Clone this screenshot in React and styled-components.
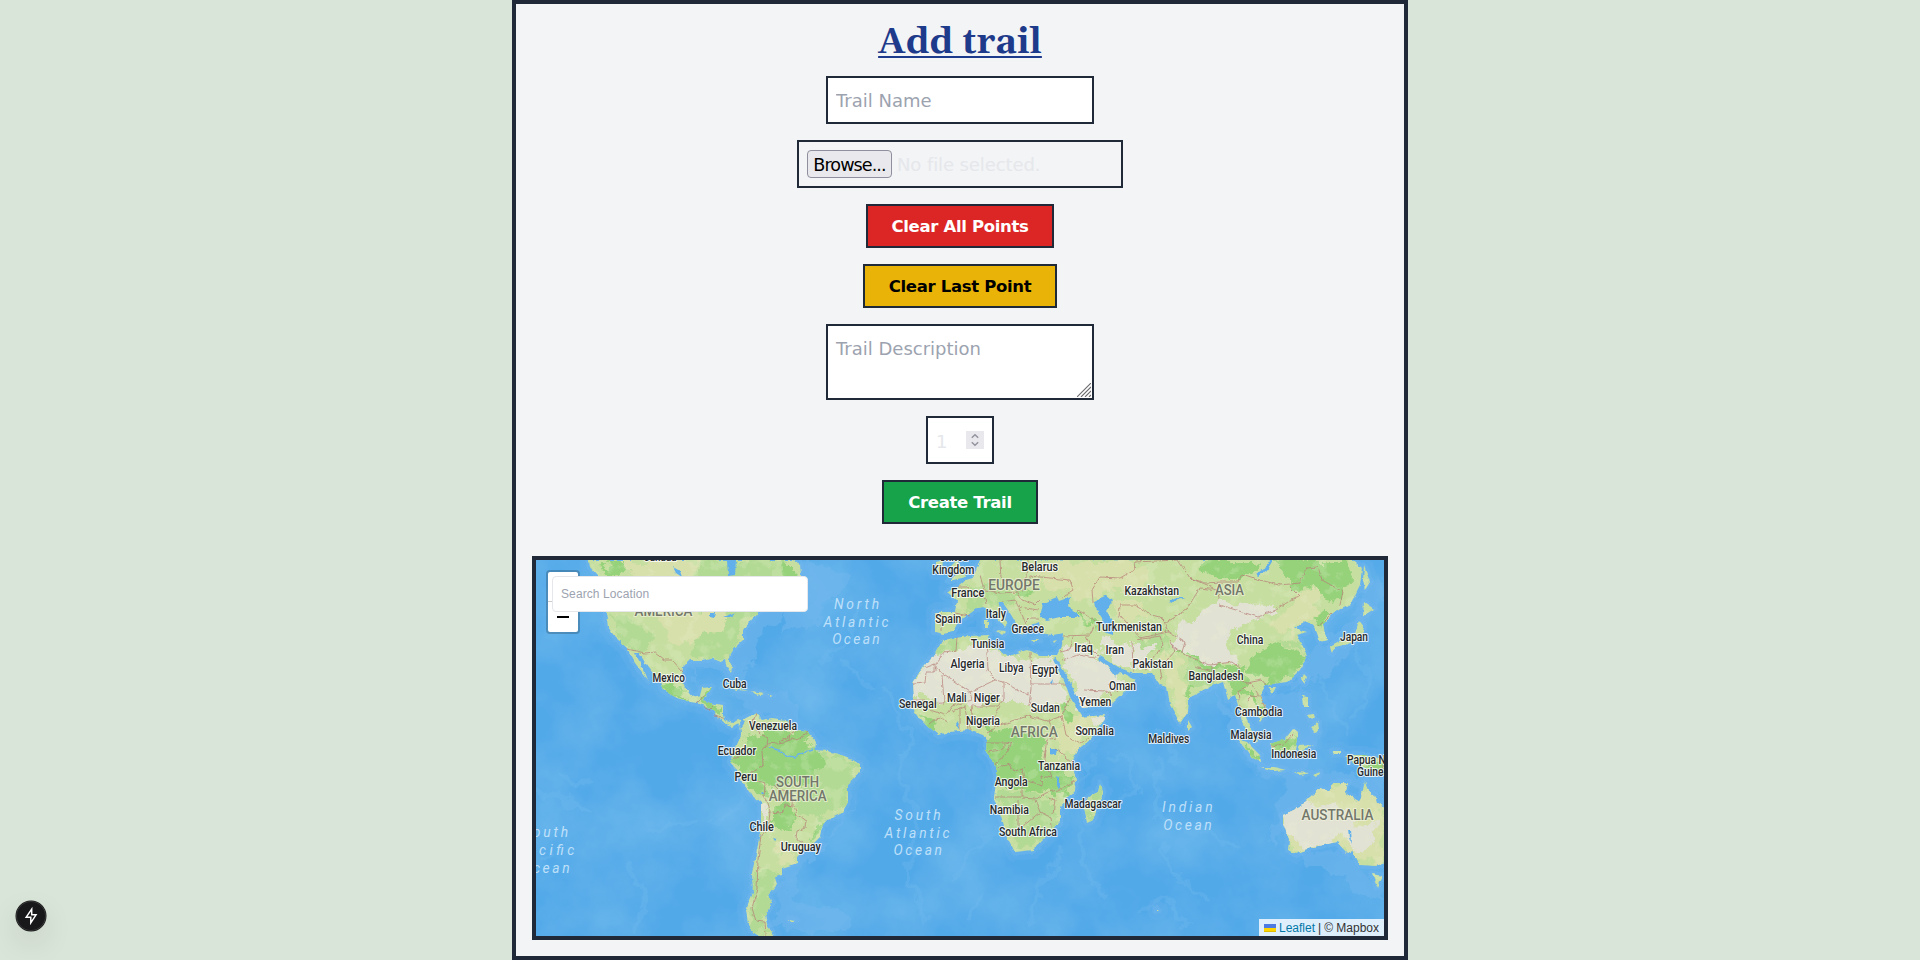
import React from "react";
import styled, { createGlobalStyle } from "styled-components";

const GlobalStyle = createGlobalStyle`
  *, *::before, *::after { box-sizing: border-box; }
  body {
    margin: 0;
    background: #dae5d9;
    font-family: "DejaVu Sans", Verdana, sans-serif;
    color: #e5e7eb;
  }
`;

const ink = "#1f2937";

const Page = styled.main`
  display: flex;
  justify-content: center;
  height: 960px;
  overflow: hidden;
`;

const Card = styled.section`
  width: 896px;
  height: 960px;
  padding: 16px;
  display: flex;
  flex-direction: column;
  background: #f3f4f6;
  border: 4px solid ${ink};
`;

const Form = styled.form`
  display: flex;
  flex-direction: column;
  align-items: center;
  gap: 16px;
`;

const Title = styled.h1`
  margin: 0;
  height: 40px;
  font: 700 36px/46px Gelasio, Georgia, "Liberation Serif", serif;
  color: #1e3a8a;
  text-decoration: underline;
  text-decoration-thickness: 2px;
  text-underline-offset: 3px;
  text-decoration-skip-ink: none;
`;

const Field = styled.input`
  width: 268px;
  height: 48px;
  padding: 8px;
  border: 2px solid ${ink};
  border-radius: 0;
  outline: none;
  background: #fff;
  color: #e5e7eb;
  font: 400 18px/28px "DejaVu Sans", sans-serif;
  &::placeholder { color: #9ca3af; opacity: 1; }
`;

const AreaWrap = styled.div`
  position: relative;
  width: 268px;
  height: 76px;
`;

const Area = styled(Field).attrs({ as: "textarea" })`
  display: block;
  height: 76px;
  padding-top: 9px;
  resize: none;
  overflow: hidden;
`;

const Grip = styled.svg`
  position: absolute;
  right: 3px;
  bottom: 3px;
`;

const FilePicker = styled.label`
  display: flex;
  align-items: center;
  gap: 5px;
  width: 326px;
  height: 48px;
  padding: 0 8px;
  border: 2px solid ${ink};
  font-size: 18px;
  line-height: 28px;
  white-space: nowrap;
`;

const FileStatus = styled.span`
  padding-top: 2px;
  letter-spacing: -0.1px;
`;

const Browse = styled.span`
  width: 85px;
  height: 28px;
  border: 1px solid #8f8f9d;
  border-radius: 4px;
  background: #e9e9ed;
  color: #000;
  font-size: 17.6px;
  line-height: 28px;
  letter-spacing: -0.95px;
  text-align: center;
`;

const NumberBox = styled.div`
  display: flex;
  align-items: center;
  justify-content: space-between;
  width: 68px;
  height: 48px;
  padding: 0 8px;
  background: #fff;
  border: 2px solid ${ink};
  font-size: 18px;
`;

const NumberValue = styled.span`
  padding-top: 2px;
`;

const Spinner = styled.span`
  display: flex;
  width: 18px;
  height: 18px;
  background: #e9e9ed;
`;

const Button = styled.button`
  width: ${(p) => p.$width}px;
  height: 44px;
  padding: 2px 0 0;
  border: 2px solid ${ink};
  border-radius: 0;
  background: ${(p) => p.$bg};
  color: ${(p) => p.$fg || "#fff"};
  font: 700 16.5px/24px "DejaVu Sans", sans-serif;
  letter-spacing: -0.33px;
  white-space: nowrap;
`;

const MapFrame = styled.div`
  position: relative;
  height: 384px;
  margin-top: 32px;
  border: 4px solid ${ink};
  overflow: hidden;
  background: #53a9e8;
  font-family: "Liberation Sans", Arial, sans-serif;
`;

const MapSvg = styled.svg`
  display: block;
  width: 848px;
  height: 376px;
`;

const ZoomBar = styled.div`
  position: absolute;
  left: 10px;
  top: 10px;
  width: 34px;
  height: 64px;
  border: 2px solid rgba(0, 0, 0, 0.2);
  border-radius: 4px;
  background: #fff;
  background-clip: padding-box;
`;

const ZoomButton = styled.div`
  height: 30px;
  border-bottom: ${(p) => (p.$last ? "none" : "1px solid #ccc")};
  display: flex;
  align-items: center;
  justify-content: center;
`;

const Search = styled.input`
  position: absolute;
  left: 16px;
  top: 16px;
  width: 256px;
  height: 36px;
  padding: 0 8px;
  border: 1px solid #e5e7eb;
  border-radius: 4px;
  outline: none;
  background: #fff;
  font: 400 12px/18px "Liberation Sans", Arial, sans-serif;
  letter-spacing: 0.1px;
  &::placeholder { color: #9ca3af; opacity: 1; }
`;

const Attribution = styled.div`
  position: absolute;
  right: 0;
  bottom: 0;
  display: flex;
  align-items: center;
  gap: 3px;
  height: 17px;
  padding: 0 5px;
  background: rgba(255, 255, 255, 0.8);
  color: #333;
  font-size: 12px;
  line-height: 18px;
  white-space: nowrap;
  a { color: #0078a8; }
`;

const DevBadge = styled.div`
  position: absolute;
  left: 16px;
  top: 901px;
  width: 30px;
  height: 30px;
  border-radius: 50%;
  background: #18181b;
  box-shadow: 0 0 0 0.5px #171717, inset 0 0 0 1px rgba(255, 255, 255, 0.14), 0 12px 32px -4px rgba(0, 0, 0, 0.2);
  display: flex;
  align-items: center;
  justify-content: center;
`;

const land = [
  // North and Central America
  "M589 560L590 567L597 575L603 592L606 612L608 627L615 637L627 648L635 663L648 680L644 670L635 653L639 653L648 667L660 682L663 690L677 698L690 702L698 703L708 708L715 710L717 717L725 723L732 727L738 723L741 728L745 722L738 719L732 723L724 719L723 715L723 705L710 703L703 700L706 696L712 687L702 688L700 695L692 697L685 688L682 677L683 667L690 660L702 660L710 658L720 662L725 660L727 667L731 673L732 667L728 657L732 650L743 640L743 630L750 622L758 612L775 606L790 600L803 600L808 595L798 588L801 575L800 565L793 560Z",
  // South America
  "M740 722L746 718L756 713L763 720L772 718L785 720L797 731L808 732L816 742L815 750L828 751L847 757L860 764L860 772L848 785L848 802L842 813L828 820L822 827L820 837L812 845L802 852L797 857L797 863L782 868L782 875L775 877L777 885L768 895L772 903L765 915L767 923L774 938L762 938L753 932L748 923L746 910L750 900L753 893L752 873L757 850L761 827L761 802L750 793L742 782L735 768L730 762L733 753L737 742L741 735Z",
  // Africa
  "M955 638L943 640L933 657L923 667L913 682L914 697L912 708L918 717L928 727L938 735L950 732L968 730L983 735L987 740L986 752L993 760L997 773L994 798L1002 820L1007 837L1015 852L1033 850L1050 833L1060 822L1060 807L1075 790L1076 780L1072 763L1077 750L1090 740L1100 727L1105 715L1082 717L1070 697L1065 683L1053 660L1058 655L1040 655L1027 650L1017 653L1008 657L1000 650L990 647L989 635L970 636Z",
  // Europe and Asia
  "M980 560L977 568L973 578L966 580L958 587L947 592L957 600L955 612L935 612L935 632L943 634L953 632L958 622L968 615L977 608L983 607L990 610L997 618L1005 628L1008 622L1000 608L998 602L1003 603L1010 613L1017 625L1022 635L1027 627L1038 622L1040 633L1053 635L1063 633L1062 645L1056 657L1060 664L1070 682L1082 708L1110 705L1118 697L1125 692L1136 680L1120 672L1115 677L1105 664L1098 659L1100 656L1120 668L1133 673L1152 673L1160 685L1167 687L1170 705L1180 723L1188 712L1189 698L1210 687L1223 682L1228 700L1235 695L1240 712L1242 722L1248 732L1256 743L1258 740L1250 728L1246 717L1247 708L1257 712L1260 722L1268 712L1260 695L1265 685L1287 682L1300 670L1307 655L1300 642L1297 635L1307 632L1295 628L1305 621L1313 625L1317 633L1320 642L1327 640L1323 625L1333 613L1350 605L1360 585L1362 568L1350 558Z",
  // Australia and Tasmania
  "M1283 815L1300 807L1310 797L1320 788L1330 792L1333 783L1348 783L1345 793L1360 802L1365 781L1368 792L1375 795L1377 803L1390 810L1390 862L1375 866L1360 865L1352 850L1347 853L1337 842L1313 847L1295 854L1288 850L1289 840L1283 823Z",
  "M1372 874L1382 876L1377 887Z",
  // Madagascar, Sri Lanka
  "M1100 783L1103 792L1093 820L1087 823L1084 808L1088 797L1098 792Z",
  "M1188 720L1192 727L1188 731Z",
  // Japan and Sakhalin
  "M1359 620L1364 627L1361 638L1348 644L1335 647L1332 654L1330 647L1343 640L1355 634Z",
  "M1364 602L1374 609L1363 616Z M1364 566L1370 582L1365 590L1363 580Z",
  // Taiwan, Hainan, Philippines
  "M1304 674L1307 677L1304 684L1301 680Z M1268 687L1276 687L1272 695Z M1302 695L1308 696L1308 707L1303 707Z M1312 728L1318 721L1319 731L1315 732Z M1308 715L1313 714L1314 719L1310 718Z",
  // Indonesia and New Guinea
  "M1238 739L1247 742L1260 755L1261 763L1252 758L1246 749Z",
  "M1270 744L1285 739L1293 729L1298 733L1295 750L1283 754L1272 749Z",
  "M1261 767L1274 767L1286 770L1274 771Z M1298 746L1314 745L1303 749L1307 757L1300 757Z M1332 751L1341 751L1341 754L1334 754Z",
  "M1295 772L1310 773L1300 775Z M1313 775L1320 772L1316 777Z",
  "M1345 755L1363 755L1388 760L1388 772L1367 769L1353 763Z",
  // Caribbean islands
  "M722 686L735 687L748 691L738 690Z M752 691L764 693L757 696Z M768 695L773 695L769 696Z",
  // Britain and Ireland, Mediterranean islands
  "M957 560L963 570L966 577L949 581L956 575L951 566Z M936 562L944 560L943 570L936 571Z",
  "M985 620L988 620L988 627L985 627Z M996 630L1006 631L1002 635Z M1032 640L1040 640L1034 642Z M1053 641L1057 640L1054 643Z",
  "M789 919L796 920L791 922Z M1156 908L1159 911L1156 911Z",
].join(" ");

const steppe = [
  "M625 560L700 560L690 580L700 606L682 635L674 640L660 620L655 590L625 575Z",
  "M667 618L722 610L720 630L690 640L670 636Z",
  "M1040 560L1130 560L1150 575L1130 590L1110 590L1090 600L1050 590L1040 580Z",
  "M1115 600L1135 600L1150 620L1120 620Z M1270 620L1300 595L1310 610L1290 640Z",
  "M1160 650L1180 660L1185 690L1188 712L1180 722L1167 687Z",
  "M1293 790L1350 785L1384 805L1384 866L1330 850L1295 854L1283 823Z",
  "M1298 590L1320 590L1320 615L1300 630L1285 605Z M780 842L797 855L795 865L778 864Z",
  "M1055 715L1105 715L1080 745L1060 760L1058 735Z M1250 695L1262 700L1266 713L1248 709Z",
];
const desert = [
  "M933 657L957 648L985 647L1008 657L1050 656L1065 690L1067 702L1030 706L1000 698L970 703L940 698L913 700L913 682Z",
  "M1060 645L1095 650L1115 677L1130 684L1082 706L1062 665Z",
  "M1100 638L1130 643L1137 665L1118 665L1100 655Z",
  "M1170 642L1182 622L1218 603L1272 604L1274 609L1260 619L1230 631L1222 644L1236 662L1210 665L1185 656Z",
  "M1283 815L1310 803L1345 806L1355 822L1374 819L1373 840L1362 850L1340 838L1305 846L1287 832Z",
  "M761 806L768 806L768 822L761 825Z M1092 718L1106 715L1096 731Z M1134 646L1155 643L1148 670L1133 672Z",
];
const forest = [
  "M741 737L760 730L800 730L815 747L820 760L815 781L778 785L755 782L736 765Z",
  "M738 765L752 775L767 788L768 798L750 790Z M775 808L792 805L797 820L789 828L775 820Z M815 823L822 821L820 832L811 840Z",
  "M987 730L1035 728L1045 742L1042 770L1022 772L1000 771L986 752Z",
  "M997 768L1048 768L1070 773L1074 785L1060 803L1052 792L1030 796L997 780Z",
  "M920 715L936 722L938 734L926 726Z M1065 700L1078 712L1066 722L1056 712Z",
  "M1205 560L1260 560L1252 578L1222 578L1200 567Z M1270 560L1345 560L1352 580L1340 605L1318 590L1292 585Z",
  "M1246 655L1278 645L1305 655L1297 674L1264 684L1248 675Z M1222 675L1240 664L1250 690L1258 690L1266 713L1252 692L1240 698L1233 690Z",
  "M1170 640L1225 668L1236 663L1232 670L1210 671L1175 652Z",
  "M661 683L672 684L690 702L675 697Z M700 694L712 686L708 699L722 705L722 714L708 706Z",
  "M600 564L630 562L628 575L606 577Z M780 560L795 565L800 588L782 582Z",
  "M1018 593L1032 590L1028 600L1014 597Z M1072 610L1095 622L1100 633L1080 618Z",
  "M1238 739L1261 757L1259 763Z M1270 744L1285 739L1296 731L1295 750L1274 750Z M1350 756L1388 762L1384 769L1360 766Z",
  "M1188 700L1198 688L1192 685L1186 692Z M1313 620L1330 606L1325 625Z",
];
const mildGreen = [
  "M610 615L640 620L655 640L640 655L620 642Z M700 560L790 560L800 590L745 620L735 660L692 655L700 620Z",
  "M820 752L860 764L848 800L822 818L800 812L792 790L815 775Z M756 870L778 872L764 910L770 936L752 930Z",
  "M995 790L1050 798L1060 820L1045 838L1016 848L1003 815Z M1100 783L1103 792L1087 823L1084 808Z",
  "M965 585L1010 585L1015 605L970 612Z M1280 645L1306 650L1298 640Z M933 640L955 638L958 646L935 655Z",
  "M1140 640L1165 628L1170 650L1145 656Z M1190 655L1225 672L1210 686L1192 690Z",
];

const lakes = [
  "M1040 617L1043 603L1057 597L1059 601L1070 597L1068 605L1080 617L1060 617L1047 620Z",
  "M1094 601L1107 595L1113 600L1106 611L1115 626L1113 635L1104 632L1102 618L1095 607Z",
  "M727 560L736 560L735 575L728 576Z M673 567L680 571L682 577L676 573Z M710 612L715 612L714 618L710 617Z M723 617L736 612L730 617Z",
  "M1050 748L1057 748L1056 755L1050 754Z M956 724L958 721L960 729L957 728Z M1050 683L1053 679L1052 684Z M1057 776L1059 778L1059 790L1057 785Z",
  "M1270 560L1273 560L1267 570L1258 577L1256 575L1264 569Z",
  "M1169 601L1178 597L1186 597L1178 599L1171 604Z M1349 830L1351 830L1352 843L1350 838Z M773 838L777 839L775 841Z M762 791L765 795L761 795Z",
];

const borders = [
  "M627 649L645 653L655 652L665 660L672 660L683 672",
  "M697 703L702 698L704 694M703 706L710 710L715 705M715 716L723 718",
  "M756 713L752 725L760 734L768 738L767 744L778 743L790 735L797 731M767 744L762 751L763 765L752 772L751 779L765 783M778 743L784 742L792 738L797 740L808 732M790 735L788 742",
  "M733 758L738 758L745 749M765 783L764 797L768 803L770 812L768 830L761 835L758 860L757 890L752 908L756 921L765 922L766 936",
  "M768 812L782 813L785 805L794 806L797 815L806 820L805 828L797 831L796 839L808 846M774 785L779 790L793 794L792 805",
  "M957 637L956 650L945 652L935 664L925 668M935 664L935 672L926 672L925 683L913 684M935 668L970 692L995 680L988 670L987 652L985 642M942 675L944 703L922 704M970 692L972 700L952 706L946 715M995 680L1004 682L1028 695L1028 692M1030 652L1031 689L1029 706M1031 684L1066 684M1004 682L1004 699L998 706L974 706",
  "M914 700L925 700L930 710L945 715M930 724L938 717L948 722M952 711L965 706L968 730M960 708L960 730M972 704L970 730M978 728L992 722L1000 706M987 733L1000 725L1028 716L1048 721L1062 716L1070 698M1062 716L1066 735L1080 744L1088 738M1048 721L1055 738L1047 740L1044 758M986 743L1012 743M988 752L1000 750L1009 742M995 764L1007 753L1012 742M997 768L1010 764L1014 772L1022 768L1024 780L1042 785L1041 776L1052 778L1045 760L1046 750M1054 747L1072 762M1022 780L1022 797L995 797M1022 798L1035 799L1048 792L1058 790L1075 781M1018 800L1018 830L1028 822L1040 812L1050 817L1051 827M1035 800L1040 812M1048 798L1055 800L1053 814L1050 817",
  "M935 615L942 615L941 630M955 613L970 616M958 587L968 587L972 593L985 598L986 605M980 575L984 590L977 595M1000 561L1001 578L1010 583L1027 578L1028 560M985 590L1000 593L1018 592L1030 585L1030 576L1070 580L1074 590L1062 598M1002 602L1015 600L1020 610L1026 624M1020 607L1038 610M1018 593L1022 600L1035 605L1040 600M1026 622L1030 618L1039 618",
  "M1063 636L1090 635L1095 625M1078 610L1098 622M1093 602L1092 590L1100 577L1120 578L1134 570L1135 562L1178 560L1190 578L1205 583L1222 582L1238 582L1242 574L1260 580L1280 585L1300 583L1306 568L1318 567L1322 580L1343 592L1340 605",
  "M1190 578L1218 590L1220 605L1258 617L1275 610L1290 600L1300 597L1290 587M1218 590L1200 588L1186 610L1165 622L1161 618M1119 618L1120 605L1135 605L1152 615L1163 618L1168 632L1140 638L1120 615",
  "M1060 652L1070 650L1073 637M1062 660L1078 655L1095 658M1086 636L1092 650L1098 656M1132 640L1133 672M1136 640L1160 636L1163 645L1152 660L1146 670M1170 640L1175 650L1160 667L1162 680M1172 645L1185 655L1210 665L1232 662L1240 668L1235 680L1223 678L1210 682M1165 630L1185 642L1182 652M1212 666L1212 672L1195 667",
  "M1240 680L1247 683L1262 680L1266 685M1250 682L1262 700L1267 713M1246 688L1238 692L1241 715M1248 702L1252 696L1260 697M1318 627L1327 618L1332 613",
  "M1271 746L1284 744L1293 734M1384 755L1384 770M1107 683L1118 693M1084 690L1105 691L1112 695",
].join("");

const shelf = "M590 560L812 600L765 625L740 690L722 668L690 668L700 688Z M800 560L850 575L815 625L780 630Z M730 690L790 695L800 725L770 712L745 706Z M785 865L835 835L855 800L868 780L820 850L800 870L790 905L850 915L845 930L770 930Z M1310 650L1355 615L1375 570L1384 600L1345 660L1320 680L1290 690Z M1232 705L1300 690L1320 735L1300 780L1262 775L1235 745Z M1290 775L1384 772L1384 800L1350 790L1300 805L1270 850L1275 810Z M1215 690L1235 720L1245 745L1230 735Z M1297 855L1340 850L1375 885L1384 900L1360 890Z";
const ridges = "M536 790L560 798L590 815M562 772L575 783L590 780M625 860L645 900L635 935M650 830L700 820M740 800L715 825M880 685L910 735L900 780L920 830L905 870L930 920M840 660L870 690M1000 825L975 850L950 880M980 895L970 920M1110 755L1130 765L1135 790L1120 800M1160 760L1158 820L1210 835L1240 845M1160 840L1180 880L1210 900M1060 850L1040 890L1030 925M1080 830L1085 870L1110 900M1140 910L1165 895L1185 925M1355 645L1375 690L1350 720M1320 680L1345 735M1160 730L1178 765M1095 755L1060 800M555 850L540 862M820 660L850 640L860 600";

const countries = [
  ["Canada", 660, 561, 33], ["Mexico", 668.7, 681.5, 32.5], ["Cuba", 734.7, 687.5, 24],
  ["Venezuela", 773, 730, 48], ["Ecuador", 737, 755, 38.5], ["Peru", 745.7, 781, 22.5],
  ["Chile", 761.7, 830.7, 24.5], ["Uruguay", 800.8, 850.7, 40], ["Angola", 1011.2, 786, 33],
  ["Namibia", 1009.3, 813.5, 39], ["South Africa", 1028, 836, 58], ["Tanzania", 1059, 769.5, 42],
  ["Madagascar", 1093, 808, 57], ["United", 953.7, 561, 29], ["Kingdom", 953.3, 573.5, 42],
  ["Belarus", 1039.8, 571.3, 36.5], ["France", 967.8, 596.8, 33], ["Spain", 948.3, 622.7, 26],
  ["Italy", 995.8, 618.3, 20], ["Greece", 1027.7, 632.8, 32.5], ["Tunisia", 987.5, 648.3, 33.5],
  ["Algeria", 967.5, 668, 34], ["Libya", 1011.3, 672, 24.5], ["Egypt", 1045, 673.7, 26.5],
  ["Mali", 956.8, 702, 19.5], ["Niger", 986.8, 702, 26], ["Senegal", 917.8, 707.8, 37.5],
  ["Sudan", 1045.3, 712, 29], ["Nigeria", 983, 724.5, 34], ["Somalia", 1094.7, 735.2, 38.5],
  ["Yemen", 1095.3, 706, 32], ["Iraq", 1083.5, 652, 18.5], ["Kazakhstan", 1151.7, 595, 54.5],
  ["Turkmenistan", 1129, 630.8, 66], ["China", 1250, 643.7, 26.5], ["Iran", 1114.7, 653.8, 18.5],
  ["Pakistan", 1152.7, 668, 40.5], ["Bangladesh", 1216, 680, 55], ["Oman", 1122.5, 689.5, 27],
  ["Cambodia", 1258.7, 716, 47.5], ["Malaysia", 1251, 739, 41], ["Maldives", 1168.7, 742.5, 41],
  ["Japan", 1354, 640.5, 28], ["Indonesia", 1293.8, 758, 45], ["Papua New", 1373, 764, 52],
  ["Guinea", 1373, 776.2, 32],
];

const continents = [
  ["AMERICA", 663.5, 615.5, 58], ["SOUTH", 797.5, 786.8, 43], ["AMERICA", 797.7, 801.3, 58],
  ["EUROPE", 1014, 589.8, 51.5], ["AFRICA", 1034.3, 736.9, 47], ["ASIA", 1229.5, 595, 29],
  ["AUSTRALIA", 1337.5, 820.4, 72],
];

const oceans = [
  ["North", 856.5, 609.4, 45], ["Atlantic", 856, 626.5, 65], ["Ocean", 856, 643.8, 47.5],
  ["South", 917.5, 820.4, 46], ["Atlantic", 917, 837.9, 65], ["Ocean", 917.7, 855.2, 48.5],
  ["Indian", 1187.3, 812.4, 50.5], ["Ocean", 1187.5, 829.8, 48.5],
  ["South", 545, 836.8, 46], ["Pacific", 545.2, 854.8, 58], ["Ocean", 545.3, 872.5, 48.5],
];

const CountryText = styled.text`
  font: 500 12.3px Roboto, sans-serif;
  fill: #26282b;
  stroke: rgba(255, 255, 255, 0.8);
  stroke-width: 2.2px;
  stroke-linejoin: round;
  paint-order: stroke;
`;

const ContinentText = styled(CountryText)`
  font-size: 14.2px;
  fill: #73776b;
  stroke: rgba(240, 243, 220, 0.7);
`;

const OceanText = styled.text`
  font: italic 400 13.8px Roboto, sans-serif;
  fill: #bfe0fa;
`;

function Labels({ items, as: Text, adjust = "spacingAndGlyphs" }) {
  return items.map(([label, x, y, w]) => (
    <Text key={label + x + y} x={x - w / 2} y={y} textLength={w} lengthAdjust={adjust}>
      {label}
    </Text>
  ));
}

function WorldMap() {
  return (
    <MapSvg viewBox="536 560 848 376" aria-label="World map">
      <defs>
        <clipPath id="land"><path d={land} /></clipPath>
        <filter id="coast" x="536" y="560" width="848" height="376" filterUnits="userSpaceOnUse">
          <feTurbulence type="fractalNoise" baseFrequency="0.17" numOctaves="3" seed="4" />
          <feDisplacementMap in="SourceGraphic" scale="4" xChannelSelector="R" yChannelSelector="G" />
        </filter>
        <filter id="patch" x="536" y="560" width="848" height="376" filterUnits="userSpaceOnUse">
          <feTurbulence type="fractalNoise" baseFrequency="0.06" numOctaves="4" seed="9" />
          <feDisplacementMap in="SourceGraphic" scale="22" xChannelSelector="R" yChannelSelector="G" />
        </filter>
        <filter id="seafloor" x="536" y="560" width="848" height="376" filterUnits="userSpaceOnUse">
          <feTurbulence type="fractalNoise" baseFrequency="0.014" numOctaves="5" seed="21" />
          <feColorMatrix values="0 0 0 0 0.47  0 0 0 0 0.74  0 0 0 0 0.94  1.8 0 0 0 -0.6" />
        </filter>
        <filter id="relief" x="536" y="560" width="848" height="376" filterUnits="userSpaceOnUse">
          <feTurbulence type="fractalNoise" baseFrequency="0.07" numOctaves="4" seed="7" />
          <feColorMatrix values="0 0 0 0 0.86  0 0 0 0 0.89  0 0 0 0 0.68  8 0 0 0 -4.3" />
        </filter>
      </defs>
      <rect x="536" y="560" width="848" height="376" fill="#52a9e8" />
      <rect x="536" y="560" width="848" height="376" filter="url(#seafloor)" opacity="0.26" />
      <g filter="url(#patch)">
        <path d={ridges} fill="none" stroke="#73b8ef" strokeWidth="5" opacity="0.3" />
        <path d={shelf} fill="#6fb5ec" opacity="0.6" />
      </g>
      <g filter="url(#coast)">
        <path d={land} fill="none" stroke="#66b2ec" strokeWidth="18" strokeLinejoin="round" opacity="0.35" />
        <path d={land} fill="none" stroke="#70b6ed" strokeWidth="7" strokeLinejoin="round" opacity="0.5" />
        <path d={land} fill="#c6dea0" />
        <g clipPath="url(#land)">
          <g filter="url(#patch)">
            <path d={mildGreen.join(" ")} fill="#b3da94" />
            <path d={steppe.join(" ")} fill="#d7dfaa" />
            <path d={forest.join(" ")} fill="#95d27a" />
            <path d={desert.join(" ")} fill="#e1e2d3" />
          </g>
          <rect x="536" y="560" width="848" height="376" filter="url(#relief)" opacity="0.2" />
        </g>
        <path d={lakes.join(" ")} fill="#62b0eb" />
        <path d="M768 747L778 750L787 756L795 757L802 753L813 750" fill="none" stroke="#6ab4ec" strokeWidth="1.5" />
        <path d={borders} fill="none" stroke="#b77f78" strokeWidth="0.8" opacity="0.9" />
      </g>
      <Labels items={oceans} as={OceanText} adjust="spacing" />
      <Labels items={continents} as={ContinentText} />
      <Labels items={countries} as={CountryText} />
    </MapSvg>
  );
}

export default function App() {
  return (
    <Page>
      <GlobalStyle />
      <Card>
        <Form>
          <Title>Add trail</Title>
          <Field placeholder="Trail Name" />
          <FilePicker>
            <Browse>Browse...</Browse>
            <FileStatus>No file selected.</FileStatus>
          </FilePicker>
          <Button type="button" $bg="#dc2626" $width={188}>Clear All Points</Button>
          <Button type="button" $bg="#eab308" $fg="#000" $width={194}>Clear Last Point</Button>
          <AreaWrap>
            <Area placeholder="Trail Description" />
            <Grip width="14" height="14" viewBox="0 0 14 14" stroke="#6b6b70" strokeWidth="1.1">
              <path d="M0 14L14 0M4 14L14 4M8 14L14 8M12 14L14 12" />
            </Grip>
          </AreaWrap>
          <NumberBox>
            <NumberValue>1</NumberValue>
            <Spinner>
              <svg width="18" height="18" viewBox="0 0 18 18" fill="none" stroke="#9393a0" strokeWidth="1.5">
                <path d="M5.8 6.8L9 3.8L12.2 6.8M5.8 11.2L9 14.2L12.2 11.2" />
              </svg>
            </Spinner>
          </NumberBox>
          <Button type="button" $bg="#16a34a" $width={156}>Create Trail</Button>
        </Form>
        <MapFrame>
          <WorldMap />
          <ZoomBar>
            <ZoomButton />
            <ZoomButton $last>
              <svg width="12" height="2"><rect width="12" height="2" fill="#000" /></svg>
            </ZoomButton>
          </ZoomBar>
          <Search placeholder="Search Location" />
          <Attribution>
            <svg width="12" height="8" viewBox="0 0 12 8">
              <path fill="#4C7BE1" d="M0 0h12v4H0z" />
              <path fill="#FFD500" d="M0 4h12v3H0z" />
              <path fill="#E0BC00" d="M0 7h12v1H0z" />
            </svg>
            <a>Leaflet</a>
            <span>|</span>
            <span>© Mapbox</span>
          </Attribution>
        </MapFrame>
      </Card>
      <DevBadge>
        <svg width="16" height="18" viewBox="0 0 16 18" fill="none" stroke="#fff" strokeWidth="1.5" strokeLinejoin="miter">
          <path d="M8.7 2.2L3.2 10.2H7.8V15.8L13 7.8H8.7Z" />
        </svg>
      </DevBadge>
    </Page>
  );
}
